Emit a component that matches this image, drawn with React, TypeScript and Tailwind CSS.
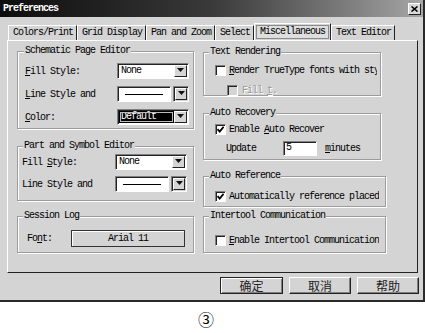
import type { ReactNode } from "react";

function U({ c }: { c: string }) {
  return <span className="underline underline-offset-[1px]">{c}</span>;
}

function Arrow({ className = "" }: { className?: string }) {
  return (
    <div
      className={`w-[13px] h-full bg-[#d4d4d4] border border-t-white border-l-white border-b-[#222] border-r-[#222] flex items-end justify-center pb-[4px] ${className}`}
    >
      <svg width="7" height="4" viewBox="0 0 7 4">
        <path d="M0 0h7L3.5 4z" fill="#111" />
      </svg>
    </div>
  );
}

const sunken =
  "border border-t-[#808080] border-l-[#808080] border-b-white border-r-white shadow-[inset_1px_1px_0_#222]";

function Combo({ children, dark = false }: { children: ReactNode; dark?: boolean }) {
  return (
    <div className={`w-[72px] h-[16px] flex p-[1px] bg-white ${sunken}`}>
      <div
        className={`flex-1 pl-[2px] leading-[12px] ${dark ? "bg-black text-white outline outline-1 -outline-offset-2 outline-[#bbb]" : ""}`}
      >
        {children}
      </div>
      <Arrow />
    </div>
  );
}

function LineCombo() {
  return (
    <div className="w-[72px] h-[16px] flex gap-[2px]">
      <div className={`flex-1 bg-white flex items-center justify-center ${sunken}`}>
        <div className="w-[38px] h-px bg-black" />
      </div>
      <div className={`w-[16px] p-[1px] bg-[#d4d4d4] ${sunken}`}>
        <Arrow className="w-full" />
      </div>
    </div>
  );
}

function Check({ checked = false, disabled = false }: { checked?: boolean; disabled?: boolean }) {
  return (
    <div
      className={`w-[11px] h-[11px] shrink-0 flex items-center justify-center ${disabled ? "bg-[#d4d4d4]" : "bg-white"} ${sunken}`}
    >
      {checked && (
        <svg width="7" height="7" viewBox="0 0 7 7">
          <path d="M0.5 3.2l2.2 2.4L6.6 0.8" stroke="#000" strokeWidth="1.8" fill="none" />
        </svg>
      )}
    </div>
  );
}

function Group({
  title,
  className,
  titleMl = "ml-[5px]",
  children,
}: {
  title: string;
  className: string;
  titleMl?: string;
  children: ReactNode;
}) {
  return (
    <div
      className={`border border-[#9c9c9c] shadow-[1px_1px_0_#fff,inset_1px_1px_0_#fff] ${className}`}
    >
      <div className={`-mt-[6px] ${titleMl} w-fit px-[1px] bg-[#d4d4d4] leading-[10px]`}>{title}</div>
      {children}
    </div>
  );
}

const tabs = ["Colors/Print", "Grid Display", "Pan and Zoom", "Select"];

export default function App() {
  return (
    <div className="w-[425px] h-[333px] bg-white text-[10px] tracking-[-1px] text-black font-['Liberation_Mono','DejaVu_Sans_Mono',monospace]">
      {/* dialog */}
      <div className="w-[425px] h-[302px] bg-[#d4d4d4] border-r-2 border-b-2 border-r-[#2a2a2a] border-b-[#2a2a2a] flex flex-col">
        {/* title bar */}
        <div className="h-[17px] bg-linear-to-r from-[#0d0d0d] via-[#3a3a3a] to-[#a6a6a6] flex items-center justify-between pl-[3px] pr-[2px]">
          <span className="text-white font-bold leading-[10px]">Preferences</span>
          <div className="w-[13px] h-[12px] bg-[#d8d8d8] border border-t-white border-l-white border-b-[#222] border-r-[#222] flex items-center justify-center">
            <svg width="7" height="6" viewBox="0 0 7 6">
              <path d="M0.5 0.5l6 5M6.5 0.5l-6 5" stroke="#000" strokeWidth="1.6" />
            </svg>
          </div>
        </div>

        {/* tabs */}
        <div className="h-[17px] mt-[6px] pl-[8px] flex items-end">
          {tabs.map((t) => (
            <div
              key={t}
              className="h-[15px] pl-[4px] pr-[3px] leading-[13px] border-t border-l border-t-white border-l-white border-r border-r-[#222] whitespace-nowrap"
            >
              {t}
            </div>
          ))}
          <div className="h-[17px] px-[1px] pt-[1px] border-t border-l border-t-white border-l-white border-r border-r-[#222]">
            <div className="h-[14px] px-[3px] leading-[12px] border border-[#8a8a8a] bg-[#dedede]">
              Miscellaneous
            </div>
          </div>
          <div className="h-[15px] pl-[4px] pr-[3px] leading-[13px] border-t border-l border-t-white border-l-white border-r border-r-[#222] whitespace-nowrap">
            Text Editor
          </div>
        </div>

        {/* panel */}
        <div className="ml-[7px] w-[411px] h-[233px] border border-t-white border-l-white border-r-[#222] border-b-[#222] pt-[10px] pl-[9px] flex gap-[9px]">
          {/* left column */}
          <div className="w-[177px] flex flex-col">
            <Group title="Schematic Page Editor" className="h-[78px]" titleMl="ml-[6px]">
              <div className="mt-[7px] flex flex-col gap-[7px] pl-[7px] pr-[4px]">
                <div className="h-[16px] flex items-center justify-between">
                  <span>
                    <U c="F" />
                    ill Style:
                  </span>
                  <Combo>None</Combo>
                </div>
                <div className="h-[16px] flex items-center justify-between">
                  <span>
                    <U c="L" />
                    ine Style and
                  </span>
                  <LineCombo />
                </div>
                <div className="h-[16px] flex items-center justify-between">
                  <span>
                    <U c="C" />
                    olor:
                  </span>
                  <Combo dark>Default</Combo>
                </div>
              </div>
            </Group>

            <Group title="Part and Symbol Editor" className="h-[55px] mt-[17px]">
              <div className="mt-[3px] flex flex-col gap-[6px] pl-[4px] pr-[6px]">
                <div className="h-[16px] flex items-center justify-between">
                  <span>
                    Fill <U c="S" />
                    tyle:
                  </span>
                  <Combo>None</Combo>
                </div>
                <div className="h-[16px] flex items-center justify-between">
                  <span>Line Style and</span>
                  <LineCombo />
                </div>
              </div>
            </Group>

            <Group title="Session Log" className="h-[37px] mt-[15px]">
              <div className="mt-[9px] flex items-center justify-between pl-[9px] pr-[8px]">
                <span>
                  Fo
                  <U c="n" />
                  t:
                </span>
                <div className="w-[114px] h-[17px] border border-[#333] shadow-[inset_1px_1px_0_#fff] flex items-center justify-center">
                  Arial 11
                </div>
              </div>
            </Group>
          </div>

          {/* right column */}
          <div className="w-[183px] flex flex-col">
            <Group title="Text Rendering" className="w-[178px] h-[44px] mt-[1px]">
              <div className="mt-[6px] flex items-center gap-[3px] pl-[11px] pr-[3px]">
                <Check />
                <span className="whitespace-nowrap overflow-hidden">
                  <U c="R" />
                  ender TrueType fonts with style
                </span>
              </div>
              <div className="mt-[5px] flex items-center gap-[4px] pl-[23px]">
                <Check disabled />
                <span className="text-[#9a9a9a] [text-shadow:1px_1px_0_#fff]">
                  Fill <U c="t" />.
                </span>
              </div>
            </Group>

            <Group title="Auto Recovery" className="w-[178px] h-[47px] mt-[17px]">
              <div className="mt-[4px] flex items-center gap-[3px] pl-[11px]">
                <Check checked />
                <span className="whitespace-nowrap">
                  Enable <U c="A" />
                  uto Recover
                </span>
              </div>
              <div className="mt-[4px] flex items-center pl-[22px]">
                <span>Update</span>
                <div className={`ml-[27px] w-[34px] h-[15px] bg-white pl-[2px] leading-[12px] ${sunken}`}>5</div>
                <span className="ml-[8px]">
                  <U c="m" />
                  inutes
                </span>
              </div>
            </Group>

            <Group title="Auto Reference" className="w-[183px] h-[31px] mt-[16px]">
              <div className="mt-[8px] flex items-center gap-[3px] pl-[11px] pr-[6px]">
                <Check checked />
                <span className="whitespace-nowrap overflow-hidden">Automatically reference placed</span>
              </div>
            </Group>

            <Group title="Intertool Communication" className="w-[183px] h-[37px] mt-[9px]">
              <div className="mt-[12px] flex items-center gap-[3px] pl-[11px] pr-[4px]">
                <Check />
                <span className="whitespace-nowrap overflow-hidden">
                  <U c="E" />
                  nable Intertool Communication
                </span>
              </div>
            </Group>
          </div>
        </div>

        {/* buttons */}
        <div className="mt-[4px] flex justify-end gap-[6px] pr-[4px] text-[12px] tracking-normal text-[#222] font-['Noto_Sans_CJK_SC',sans-serif]">
          <button className="w-[63px] h-[17px] leading-[15px] border border-[#222] shadow-[inset_1px_1px_0_#fff,inset_-1px_-1px_0_#808080]">
            确定
          </button>
          <button className="w-[62px] h-[17px] leading-[15px] border border-t-white border-l-white border-r-[#222] border-b-[#222] shadow-[inset_-1px_-1px_0_#808080]">
            取消
          </button>
          <button className="w-[62px] h-[17px] leading-[15px] border border-t-white border-l-white border-r-[#222] border-b-[#222] shadow-[inset_-1px_-1px_0_#808080]">
            帮助
          </button>
        </div>
      </div>

      <div className="pl-[198px] pt-[9px] text-[16px] leading-[16px] tracking-normal font-['Noto_Sans_CJK_SC',sans-serif]">
        ③
      </div>
    </div>
  );
}
